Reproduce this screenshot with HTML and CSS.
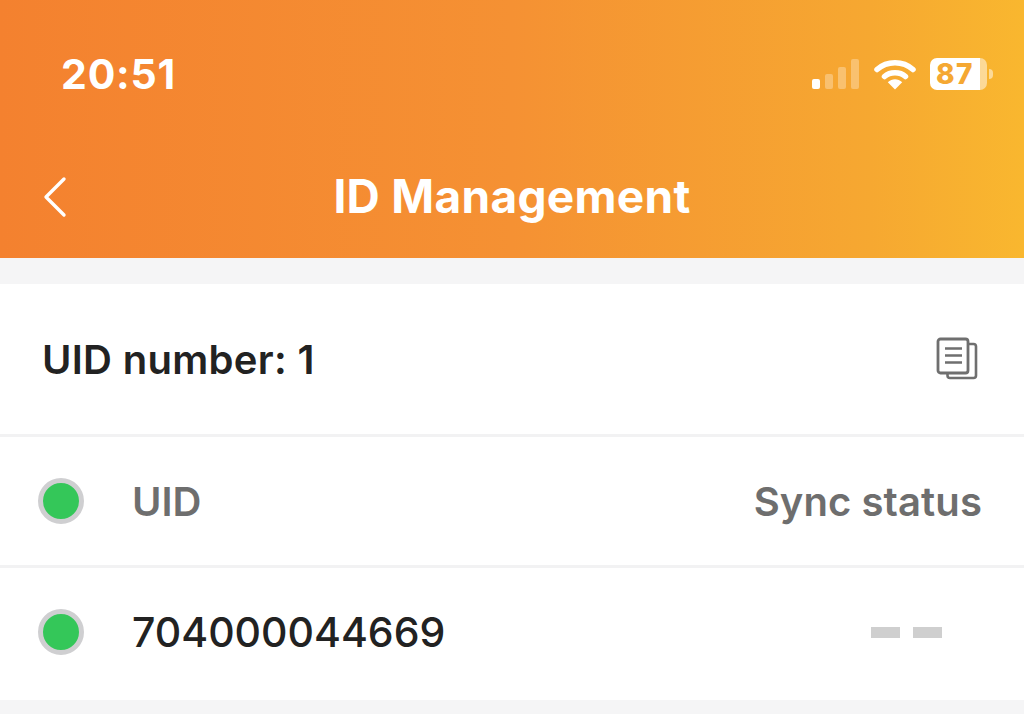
FILE: index.html
```html
<!DOCTYPE html>
<html lang="en">
<head>
    <meta charset="UTF-8">
    <meta name="viewport" content="width=device-width, initial-scale=1.0">
    <title>ID Management</title>
    <link rel="stylesheet" href="styles.css">
</head>
<body>
    <div class="header">
        <div class="status-bar">
            <span class="time">20:51</span>
            <div class="status-icons">
                <div class="signal">
                    <span class="bar bar-1"></span>
                    <span class="bar bar-2"></span>
                    <span class="bar bar-3"></span>
                    <span class="bar bar-4"></span>
                </div>
                <svg class="wifi" width="42" height="32" viewBox="0 0 42 32">
                    <path d="M3 11.5C13 2.5 29 2.5 39 11.5" fill="none" stroke="#fff" stroke-width="5.5" stroke-linecap="round"/>
                    <path d="M10.5 18.5C16 13.5 26 13.5 31.5 18.5" fill="none" stroke="#fff" stroke-width="5.5" stroke-linecap="round"/>
                    <path d="M13.8 24.2C18 20.2 24 20.2 28.2 24.2L21 31.5Z" fill="#fff"/>
                </svg>
                <div class="battery">
                    <div class="battery-body">
                        <span class="battery-level">87</span>
                        <span class="battery-rest"></span>
                    </div>
                    <span class="battery-nub"></span>
                </div>
            </div>
        </div>
        <div class="nav-bar">
            <svg class="back" width="26" height="42" viewBox="0 0 26 42">
                <path d="M22 3L4 21L22 39" fill="none" stroke="#fff" stroke-width="3.4" stroke-linecap="round" stroke-linejoin="round"/>
            </svg>
            <h1>ID Management</h1>
        </div>
    </div>

    <div class="card">
        <div class="row row-count">
            <span class="count">UID number: 1</span>
            <svg class="copy" width="42" height="44" viewBox="0 0 42 44">
                <path d="M32 7H37.5C39 7 40 8 40 9.5V38.5C40 40 39 41 37.5 41H14C12.5 41 11.5 40 11.5 38.5V36" fill="none" stroke="#6f6f6f" stroke-width="2.6"/>
                <rect x="2" y="2" width="30" height="34" rx="2.5" fill="#fff" stroke="#6f6f6f" stroke-width="2.8"/>
                <path d="M9 11.5H26M9 18.5H26M9 25.5H26" fill="none" stroke="#6f6f6f" stroke-width="2.4"/>
            </svg>
        </div>
        <div class="row row-head">
            <span class="dot"></span>
            <span class="uid uid-head">UID</span>
            <span class="sync">Sync status</span>
        </div>
        <div class="row row-item">
            <span class="dot"></span>
            <span class="uid">704000044669</span>
            <div class="dashes">
                <span class="dash"></span>
                <span class="dash"></span>
            </div>
        </div>
    </div>
</body>
</html>
```

FILE: styles.css
```css
* {
    box-sizing: border-box;
}
html, body {
    height: 100%;
}
body {
    margin: 0;
    background-color: #f5f5f6;
    font-family: Inter, "Liberation Sans", sans-serif;
    overflow: hidden;
}
.header {
    height: 258px;
    background: linear-gradient(90deg, #f4812f 0%, #f59133 50%, #f6a831 85%, #f9b72f 100%);
}
.status-bar {
    height: 148px;
    display: flex;
    justify-content: space-between;
    align-items: center;
    padding: 0 31px 0 61px;
}
.time {
    color: #fff;
    font-size: 41px;
    font-weight: 700;
    letter-spacing: 0.8px;
}
.status-icons {
    display: flex;
    align-items: center;
}
.signal {
    display: flex;
    align-items: flex-end;
    gap: 5px;
    height: 30px;
    margin-right: 15px;
}
.bar {
    width: 8px;
    border-radius: 2px;
    background-color: rgba(255, 255, 255, 0.3);
}
.bar-1 {
    height: 10px;
    background-color: #fff;
}
.bar-2 {
    height: 15px;
}
.bar-3 {
    height: 22px;
}
.bar-4 {
    height: 30px;
}
.wifi {
    margin-right: 14px;
}
.battery {
    display: flex;
    align-items: center;
    gap: 2px;
}
.battery-body {
    width: 57px;
    height: 32px;
    display: flex;
    border-radius: 7px;
    overflow: hidden;
}
.battery-level {
    flex: 1;
    background-color: #fff;
    color: #f5a832;
    font-size: 28px;
    font-weight: 800;
    letter-spacing: 1.5px;
    line-height: 32px;
    text-align: center;
}
.battery-rest {
    width: 7px;
    background-color: rgba(255, 255, 255, 0.5);
}
.battery-nub {
    width: 4px;
    height: 10px;
    border-radius: 0 4px 4px 0;
    background-color: rgba(255, 255, 255, 0.5);
}
.nav-bar {
    position: relative;
    height: 96px;
    display: flex;
    align-items: center;
    justify-content: center;
}
.back {
    position: absolute;
    left: 42px;
    top: 28px;
}
h1 {
    margin: 0;
    color: #fff;
    font-size: 46px;
    font-weight: 700;
    letter-spacing: 0.3px;
}
.card {
    margin-top: 26px;
    background-color: #fff;
}
.row {
    display: flex;
    align-items: center;
    padding: 0 42px 0 38px;
    border-bottom: 3px solid #f2f2f3;
}
.row-count {
    height: 153px;
    justify-content: space-between;
    padding: 0 46px 0 42px;
}
.row-head {
    height: 131px;
}
.row-item {
    height: 132px;
    padding-bottom: 4px;
    border-bottom: none;
}
.count {
    color: #222;
    font-size: 40px;
    font-weight: 600;
    letter-spacing: 0.3px;
}
.dot {
    width: 46px;
    height: 46px;
    border: 5px solid #cfcfd1;
    border-radius: 50%;
    background-color: #34c759;
}
.uid {
    flex: 1;
    margin-left: 48px;
    color: #222;
    font-size: 41px;
    font-weight: 500;
}
.uid-head {
    color: #6e6e6e;
    font-size: 40px;
    font-weight: 600;
}
.sync {
    color: #6e6e6e;
    font-size: 40px;
    font-weight: 600;
    letter-spacing: 0.1px;
}
.dashes {
    display: flex;
    gap: 13px;
    margin-right: 40px;
}
.dash {
    width: 29px;
    height: 11px;
    background-color: #cfcfcf;
}
```
